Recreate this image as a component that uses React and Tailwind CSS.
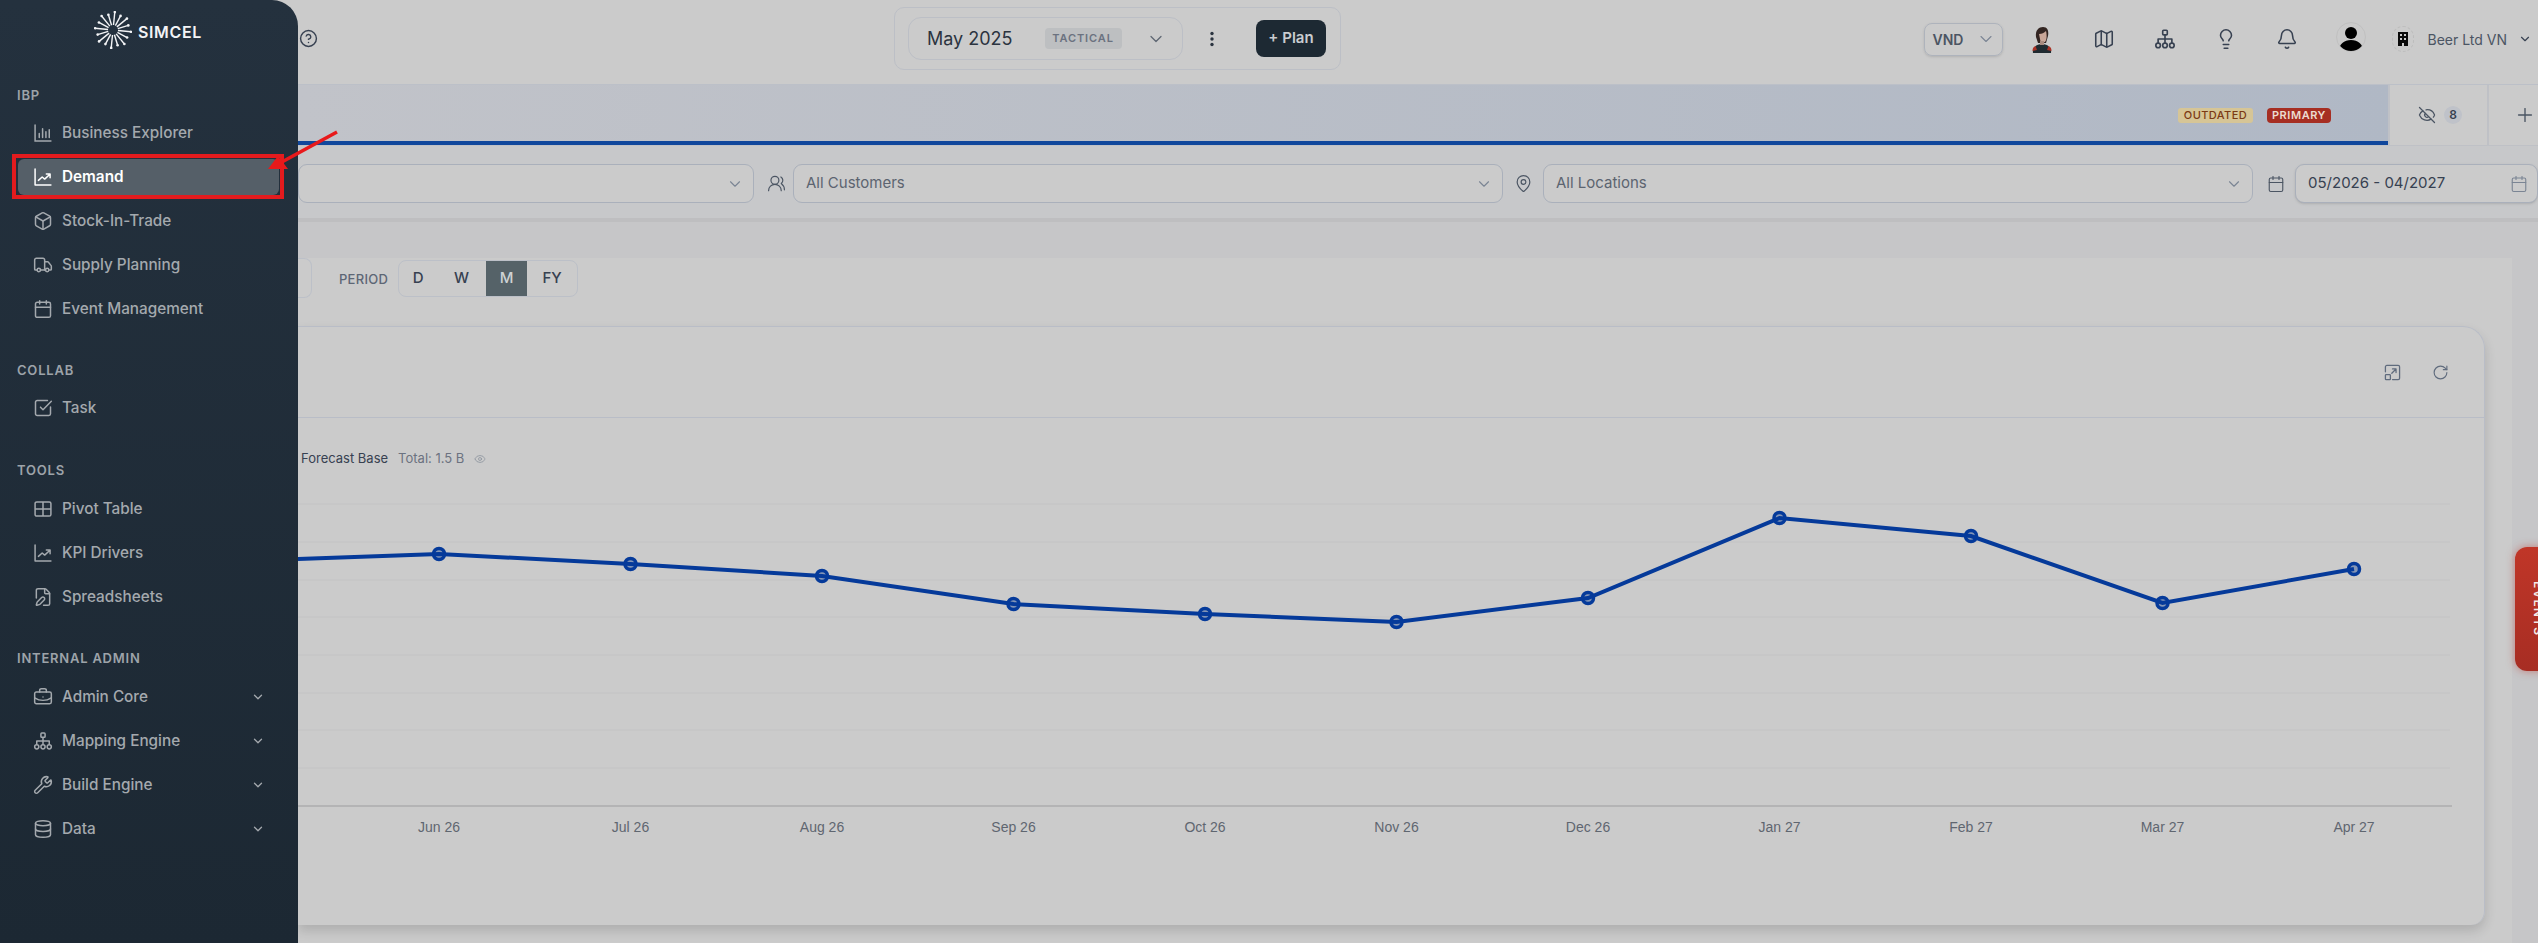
import {
  Bell,
  Box,
  BriefcaseBusiness,
  Calendar,
  ChevronDown,
  CircleHelp,
  Database,
  Eye,
  EyeOff,
  FilePen,
  Lightbulb,
  Map as MapIcon,
  MapPin,
  Plus,
  RotateCw,
  SquareCheckBig,
  Truck,
  UsersRound,
  Wrench,
} from "lucide-react";

const BarsIcon = ({ size = 20 }) => (
  <svg width={size} height={size} viewBox="0 0 24 24" fill="none" stroke="currentColor" strokeWidth="1.8" strokeLinecap="round">
    <path d="M2.5 2.5v19h19M7.5 17.5v-5M11.5 17.5V7M15.5 17.5v-7M19.5 17.5V8" />
  </svg>
);

const TrendIcon = ({ size = 20 }) => (
  <svg width={size} height={size} viewBox="0 0 24 24" fill="none" stroke="currentColor" strokeWidth="1.8" strokeLinecap="round" strokeLinejoin="round">
    <path d="M2.5 2.5v19h19M6.5 16l4.5-4 3 2.5 6-5.5M16 8.5h4.5V13" />
  </svg>
);

const TableIcon = ({ size = 20 }) => (
  <svg width={size} height={size} viewBox="0 0 24 24" fill="none" stroke="currentColor" strokeWidth="1.8">
    <rect x="2.5" y="3.5" width="19" height="17" rx="2" />
    <path d="M12 3.5v17M2.5 12h19" />
  </svg>
);

const SitemapIcon = ({ size = 20 }) => (
  <svg width={size} height={size} viewBox="0 0 24 24" fill="none" stroke="currentColor" strokeWidth="1.8" strokeLinejoin="round">
    <rect x="9.5" y="2.5" width="5" height="5" rx="1" />
    <path d="M12 7.5V12M4.5 16.5V12h15v4.5M12 12v4.5" />
    <circle cx="4.5" cy="19" r="2.5" />
    <circle cx="12" cy="19" r="2.5" />
    <circle cx="19.5" cy="19" r="2.5" />
  </svg>
);

const ExpandIcon = () => (
  <svg width="17" height="17" viewBox="0 0 24 24" fill="none" stroke="#5f6b7d" strokeWidth="1.8" strokeLinecap="round" strokeLinejoin="round">
    <path d="M2 11V4a2 2 0 0 1 2-2h16a2 2 0 0 1 2 2v16a2 2 0 0 1-2 2h-8" />
    <rect x="2" y="15" width="7" height="7" rx="1" />
    <path d="M11 13l6-6M12 7h5v5" />
  </svg>
);

const Logo = () => {
  const rays = [...Array(16).keys()].map((i) => {
    const a = (i * Math.PI) / 8 + 0.1;
    const r = i % 2 ? 16 : 18;
    return { x1: 19 + 5 * Math.cos(a), y1: 19 + 5 * Math.sin(a), x2: 19 + r * Math.cos(a), y2: 19 + r * Math.sin(a) };
  });
  return (
    <svg width="38" height="38" viewBox="0 0 38 38" stroke="#f3f4f6" strokeWidth="1.4" fill="#f3f4f6">
      {rays.map((r, i) => (
        <g key={i}>
          <line x1={r.x1} y1={r.y1} x2={r.x2} y2={r.y2} />
          <circle cx={r.x2} cy={r.y2} r="1.3" stroke="none" />
        </g>
      ))}
    </svg>
  );
};

const NavItem = ({ icon: Icon, label, active, more }) => (
  <div className={`relative h-9 mb-2 mx-[18px] w-[261px] pl-[15px] flex items-center rounded-md ${active ? "bg-[#555f68] text-white font-semibold" : "text-[#a4a9ae] font-medium"}`}>
    <Icon size={20} strokeWidth={1.8} />
    <span className="ml-[9px] text-[15.3px]">{label}</span>
    {more && <ChevronDown size={14} strokeWidth={2.2} className="ml-auto mr-[14px]" />}
    {active && <div className="absolute -left-[6px] -right-[5px] -top-[5px] -bottom-[4px] border-4 border-[#e31b1e]" />}
  </div>
);

const NavLabel = ({ children, className = "mb-3" }) => (
  <div className={`h-4 pl-[17px] text-[13px] leading-4 font-semibold tracking-[0.06em] text-[#9da3a9] ${className}`}>{children}</div>
);

const Sidebar = () => (
  <aside className="w-[298px] shrink-0 h-full rounded-tr-[26px] bg-linear-to-b from-[#24313e] to-[#1c2833] z-10">
    <div className="h-[87px] pt-[11px] pl-[94px] flex items-start">
      <Logo />
      <span className="ml-[6px] mt-[9px] text-[16px] font-semibold tracking-[0.04em] text-[#f3f4f6]">SIMCEL</span>
    </div>
    <NavLabel>IBP</NavLabel>
    <NavItem icon={BarsIcon} label="Business Explorer" />
    <NavItem icon={TrendIcon} label="Demand" active />
    <NavItem icon={Box} label="Stock-In-Trade" />
    <NavItem icon={Truck} label="Supply Planning" />
    <NavItem icon={Calendar} label="Event Management" />
    <NavLabel className="mt-[35px] mb-3">COLLAB</NavLabel>
    <NavItem icon={SquareCheckBig} label="Task" />
    <NavLabel className="mt-[36px] mb-[13px]">TOOLS</NavLabel>
    <NavItem icon={TableIcon} label="Pivot Table" />
    <NavItem icon={TrendIcon} label="KPI Drivers" />
    <NavItem icon={FilePen} label="Spreadsheets" />
    <NavLabel className="mt-[35px] mb-[13px]">INTERNAL ADMIN</NavLabel>
    <NavItem icon={BriefcaseBusiness} label="Admin Core" more />
    <NavItem icon={SitemapIcon} label="Mapping Engine" more />
    <NavItem icon={Wrench} label="Build Engine" more />
    <NavItem icon={Database} label="Data" more />
  </aside>
);

const Avatar = () => (
  <svg width="20" height="26" viewBox="0 0 20 26" className="mt-[2px]">
    <path d="M1 26c-1-5 3-9 9-9s10 4 9 9z" fill="#1f2a30" />
    <path d="M0.5 24c0-3 1-4 3-5l1.5 4zM19.5 24c0-3-1-4-3-5l-1.5 4z" fill="#a93226" />
    <path d="M4 10C3 3 7 0 11 0c4 0 6 3 5 9l-2 7H6z" fill="#332522" />
    <path d="M7 7c3 0 5-1 7-3 1 4 1 9-1 11-2 1-5 0-5-3z" fill="#c9a698" />
    <rect x="8" y="14" width="4" height="4" fill="#a88a7e" />
  </svg>
);

const UserAvatar = () => (
  <div className="w-[30px] h-[30px] rounded-full overflow-hidden border border-[#c0c0c0] -mt-1">
    <svg width="28" height="28" viewBox="0 0 28 28" fill="#000">
      <circle cx="14" cy="10" r="6" />
      <path d="M2 28c0-7 5-11 12-11s12 4 12 11z" />
    </svg>
  </div>
);

const BuildingChip = () => (
  <div className="w-[22px] h-[26px] rounded-full border border-dashed border-[#bdbdbd] flex items-center justify-center">
    <svg width="12" height="14" viewBox="0 0 12 14" fill="#0a0a0a">
      <path d="M1 0h10v14H7v-3H5v3H1zM3 2v2h2V2zm4 0v2h2V2zM3 6v2h2V6zm4 0v2h2V6z" fillRule="evenodd" />
    </svg>
  </div>
);

const Header = () => (
  <header className="h-[84px] shrink-0 flex items-center pl-[1px] pr-[6px] text-[#374151]">
    <CircleHelp size={19} strokeWidth={1.8} className="shrink-0 -mt-[7px]" />
    <div className="ml-[576px] w-[447px] h-[63px] shrink-0 -mt-[7px] rounded-[10px] border border-[#bcbfc6] flex items-center pl-[13px]">
      <div className="w-[275px] h-[43px] rounded-[13px] border border-[#bcbfc6] flex items-center pl-[18px] pr-[16px]">
        <span className="text-[18px] text-[#2b3440]">May 2025</span>
        <span className="ml-[32px] w-[77px] h-[21px] rounded bg-[#bdbfc1] flex items-center justify-center text-[11px] font-semibold tracking-[0.08em] text-[#6b7280]">TACTICAL</span>
        <ChevronDown size={20} strokeWidth={1.5} className="ml-auto text-[#5f6773]" />
      </div>
      <svg width="6" height="16" viewBox="0 0 6 16" fill="#2b3440" className="ml-[26px]">
        <circle cx="3" cy="2.5" r="1.7" />
        <circle cx="3" cy="8" r="1.7" />
        <circle cx="3" cy="13.5" r="1.7" />
      </svg>
      <button className="ml-[41px] w-[70px] h-[37px] rounded-lg bg-[#1d2933] text-[#c9ccd0] text-[15px] font-semibold">+ Plan</button>
    </div>
    <div className="ml-auto flex items-center -mt-[6px]">
      <div className="w-[79px] h-[33px] rounded-lg border border-[#aeb3bc] flex items-center pl-2 pr-[6px] shadow-sm">
        <span className="text-[14px] font-semibold text-[#4b5563]">VND</span>
        <ChevronDown size={20} strokeWidth={1.3} className="ml-auto text-[#7b8594]" />
      </div>
      <div className="ml-[29px]"><Avatar /></div>
      <MapIcon size={22} strokeWidth={1.7} className="ml-[41px]" />
      <div className="ml-[39px]"><SitemapIcon size={22} /></div>
      <Lightbulb size={22} strokeWidth={1.7} className="ml-[39px]" />
      <Bell size={22} strokeWidth={1.7} className="ml-[39px]" />
      <div className="ml-[38px]"><UserAvatar /></div>
      <div className="ml-[26px]"><BuildingChip /></div>
      <span className="ml-[14px] text-[14px] text-[#4b5563]">Beer Ltd VN</span>
      <ChevronDown size={14} strokeWidth={2} className="ml-[11px]" />
    </div>
  </header>
);

const TabBar = () => (
  <div className="h-[62px] shrink-0 flex border-t border-b border-b-[#bfc1c6] border-t-[#bcc0c8]">
    <div className="w-[2090px] bg-linear-to-r from-[#c1c3c9] to-[#b0b8c5] border-b-4 border-[#10479c] flex items-start justify-end pt-[23px] pr-[57px]">
      <span className="w-[75px] h-[15px] rounded-[3px] bg-[#d6c596] flex items-center justify-center text-[11px] font-medium tracking-[0.04em] text-[#7c3a14]">OUTDATED</span>
      <span className="ml-[14px] w-[64px] h-[15px] rounded-[4px] bg-[#a62e22] flex items-center justify-center text-[11px] font-semibold tracking-[0.05em] text-[#ecdcd0]">PRIMARY</span>
    </div>
    <div className="w-[101px] flex items-center pl-[28px] border-r-2 border-[#bfc1c6] border-l-2">
      <EyeOff size={18} strokeWidth={1.7} className="text-[#4b5563]" />
      <span className="ml-[8px] w-[18px] h-[18px] rounded-full bg-[#bfc2c9] flex items-center justify-center text-[12px] font-semibold text-[#374151]">8</span>
    </div>
    <div className="flex-1 flex items-center pl-[25px]">
      <Plus size={22} strokeWidth={1.5} className="text-[#4b5563]" />
    </div>
  </div>
);

const FilterSelect = ({ text, width, dark, icon: Icon = ChevronDown, iconSize = 18 }) => (
  <div className={`h-[39px] shrink-0 rounded-[9px] border border-[#aab0bb] bg-[#cbcbcb] flex items-center pl-3 pr-[9px] text-[15px] ${dark ? "text-[#374151] shadow-sm" : "text-[#5c6470]"} ${width}`}>
    <span>{text}</span>
    <Icon size={iconSize} strokeWidth={1.5} className="ml-auto text-[#7b8594]" />
  </div>
);

const FilterBar = () => (
  <div className="h-[76px] shrink-0 flex items-center pt-[3px] border-b-4 border-[#bebec0] bg-[#c7c8ca]">
    <FilterSelect text="" width="w-[456px]" />
    <UsersRound size={19} strokeWidth={1.5} className="ml-[13px] text-[#4b5563]" />
    <div className="ml-[7px]"><FilterSelect text="All Customers" width="w-[710px]" /></div>
    <MapPin size={19} strokeWidth={1.5} className="ml-[11px] text-[#4b5563]" />
    <div className="ml-[10px]"><FilterSelect text="All Locations" width="w-[710px]" /></div>
    <Calendar size={18} strokeWidth={1.5} className="ml-[14px] text-[#4b5563]" />
    <div className="ml-[10px]"><FilterSelect text="05/2026 - 04/2027" width="w-[243px]" dark icon={Calendar} /></div>
  </div>
);

const points = [
  [298, 558], [439, 553], [630.5, 563], [822, 575], [1013.5, 603], [1205, 613],
  [1396.5, 621], [1588, 597], [1779.5, 517], [1971, 535], [2162.5, 602], [2354, 568],
];
const months = ["Jun 26", "Jul 26", "Aug 26", "Sep 26", "Oct 26", "Nov 26", "Dec 26", "Jan 27", "Feb 27", "Mar 27", "Apr 27"];
const gridYs = [503, 541, 579, 616, 654, 692, 729, 767];

const Chart = () => (
  <svg width="2186" height="457" viewBox="298 467 2186 457" className="block">
    {gridYs.map((y) => (
      <line key={y} x1="298" x2="2450" y1={y} y2={y} stroke="#c3c3c4" />
    ))}
    <line x1="298" x2="2452" y1="805" y2="805" stroke="#adadae" strokeWidth="1.5" />
    {points.slice(1).map((p) => (
      <circle key={p[0]} cx={p[0]} cy={p[1]} r="5.5" fill="#8496b6" stroke="#053a9a" strokeWidth="3.5" />
    ))}
    <polyline points={points.map((p) => p.join(",")).join(" ")} fill="none" stroke="#053a9a" strokeWidth="4" />
    {months.map((m, i) => (
      <text key={m} x={439 + 191.5 * i} y="831" textAnchor="middle" fontSize="14" fill="#5f6670" fontFamily="Liberation Sans, sans-serif">
        {m}
      </text>
    ))}
  </svg>
);

const Period = () => (
  <div className="h-[68px] flex items-start">
    <div className="w-[14px] h-10 rounded-r-lg border border-l-0 border-[#bcc0c8]" />
    <span className="ml-[27px] mt-[12px] text-[13px] font-medium tracking-[0.02em] text-[#5d6675]">PERIOD</span>
    <div className="ml-[10px] mt-[2px] w-[180px] h-[37px] rounded-lg border border-[#bcc0c8] flex items-center text-[15px] font-medium text-[#374151]">
      <span className="w-[38px] text-center">D</span>
      <span className="w-[49px] text-center">W</span>
      <span className="w-[41px] h-[35px] flex items-center justify-center bg-[#556268] text-[#cdd2d4]">M</span>
      <span className="w-[50px] text-center">FY</span>
    </div>
  </div>
);

const ChartCard = () => (
  <div className="w-[2187px] h-[599px] rounded-tr-[22px] rounded-br-[14px] border-t border-r border-[#b9bdc7] border-b-0 shadow-[0_6px_12px_rgba(0,0,0,0.14)]">
    <div className="h-[91px] border-b border-[#b9bdc7] flex items-center justify-end pr-[35px] text-[#5f6b7d]">
      <ExpandIcon />
      <RotateCw size={17} strokeWidth={1.6} className="ml-[31px]" />
    </div>
    <div className="h-[50px] pt-[32px] pl-[3px] flex items-center text-[13px]">
      <span className="text-[#374151]">Forecast Base</span>
      <span className="ml-[10px] text-[#6b7280]">Total: 1.5 B</span>
      <Eye size={12} strokeWidth={1.5} className="ml-[10px] text-[#8a919c]" />
    </div>
    <Chart />
  </div>
);

const RedArrow = () => (
  <svg width="80" height="50" viewBox="0 0 80 50" className="absolute left-[265px] top-[128px] z-20">
    <line x1="72" y1="4" x2="15" y2="35" stroke="#e8191b" strokeWidth="3.5" />
    <polygon points="3,41 13,28 23,41" fill="#e8191b" />
  </svg>
);

export default function App() {
  return (
    <div className="relative flex w-[2538px] h-[943px] overflow-hidden bg-[#cbcbcb] font-['Inter',sans-serif]">
      <Sidebar />
      <RedArrow />
      <main className="flex-1 min-w-0 flex flex-col">
        <Header />
        <TabBar />
        <FilterBar />
        <div className="flex-1 bg-[#c6c6c8] pt-[36px] pr-[26px]">
          <div className="h-full bg-[#cbcbcb]">
            <Period />
            <ChartCard />
          </div>
        </div>
      </main>
      <div className="absolute left-[2515px] top-[547px] w-[46px] h-[124px] rounded-l-xl bg-linear-to-b from-[#c03628] to-[#a72d23] shadow-[0_0_8px_rgba(190,50,40,0.5)] flex items-center justify-center">
        <span className="[writing-mode:vertical-rl] text-[12px] font-semibold tracking-[0.1em] text-[#f4e9e6]">EVENTS</span>
      </div>
    </div>
  );
}
